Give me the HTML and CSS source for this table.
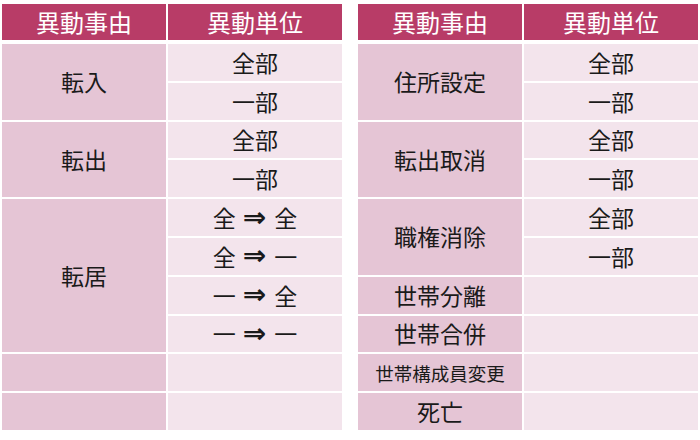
FILE: index.html
```html
<!DOCTYPE html>
<html lang="ja">
<head>
<meta charset="utf-8">
<link rel="stylesheet" href="styles.css">
</head>
<body>
<div class="page">
  <div class="tbl">
    <div class="head">
      <div class="hc">異動事由</div>
      <div class="hc">異動単位</div>
    </div>
    <div class="body">
      <div class="c1 span2">転入</div>
      <div class="c2">全部</div>
      <div class="c2">一部</div>
      <div class="c1 span2">転出</div>
      <div class="c2">全部</div>
      <div class="c2">一部</div>
      <div class="c1 span4">転居</div>
      <div class="c2">全<span class="arr">⇒</span>全</div>
      <div class="c2">全<span class="arr">⇒</span>一</div>
      <div class="c2">一<span class="arr">⇒</span>全</div>
      <div class="c2">一<span class="arr">⇒</span>一</div>
      <div class="c1"></div>
      <div class="c2"></div>
      <div class="c1"></div>
      <div class="c2"></div>
    </div>
  </div>
  <div class="tbl">
    <div class="head">
      <div class="hc">異動事由</div>
      <div class="hc">異動単位</div>
    </div>
    <div class="body">
      <div class="c1 span2">住所設定</div>
      <div class="c2">全部</div>
      <div class="c2">一部</div>
      <div class="c1 span2">転出取消</div>
      <div class="c2">全部</div>
      <div class="c2">一部</div>
      <div class="c1 span2">職権消除</div>
      <div class="c2">全部</div>
      <div class="c2">一部</div>
      <div class="c1">世帯分離</div>
      <div class="c2"></div>
      <div class="c1">世帯合併</div>
      <div class="c2"></div>
      <div class="c1 small">世帯構成員変更</div>
      <div class="c2"></div>
      <div class="c1">死亡</div>
      <div class="c2"></div>
    </div>
  </div>
</div>
</body>
</html>
```
FILE: styles.css
```css
html, body {
  margin: 0;
  padding: 0;
  background: #ffffff;
}
.page {
  display: flex;
  gap: 16px;
  padding: 4px 0 0 2px;
  font-family: "Noto Sans CJK JP", "Noto Sans", sans-serif;
}
.tbl {
  width: 340px;
  display: flex;
  flex-direction: column;
  gap: 4px;
}
.head, .body {
  display: grid;
  grid-template-columns: 164px 1fr;
  column-gap: 2px;
}
.head {
  height: 36px;
}
.hc {
  background: #b83c67;
  color: #ffffff;
  font-size: 24px;
  display: flex;
  align-items: center;
  justify-content: center;
  line-height: 1;
}
.body {
  grid-template-rows: repeat(10, 36.8px);
  row-gap: 2px;
}
.c1, .c2 {
  display: flex;
  align-items: center;
  justify-content: center;
  font-size: 23px;
  color: #1a1a1a;
  line-height: 1;
  white-space: pre;
}
.c1 {
  background: #e5c5d5;
  grid-column: 1;
}
.c2 {
  background: #f3e4ec;
  grid-column: 2;
}
.arr {
  font-family: "DejaVu Sans", sans-serif;
  font-weight: bold;
  font-size: 28px;
  margin: 0 8px 0 7px;
}
.span2 {
  grid-row: span 2;
}
.span4 {
  grid-row: span 4;
}
.small {
  font-size: 18.5px;
}
```
